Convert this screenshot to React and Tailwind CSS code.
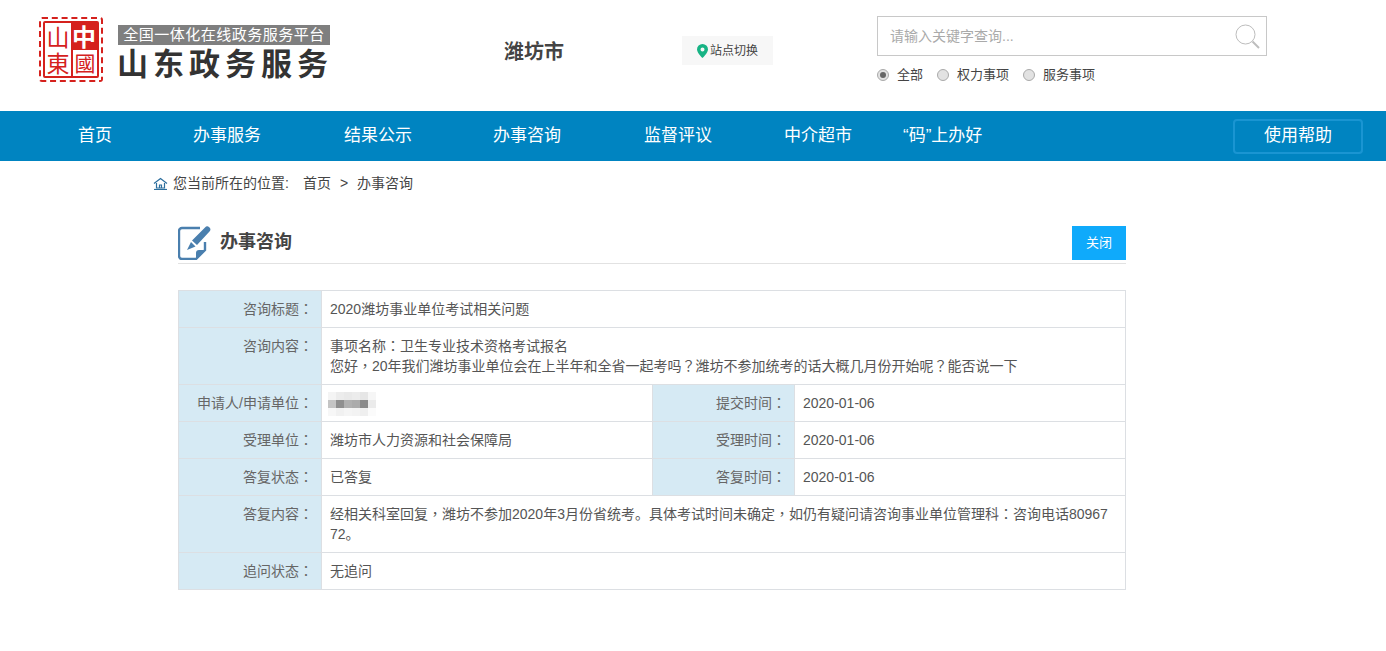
import React from "react";

const navItems = [
  { text: "首页", cls: "ml-[78px]" },
  { text: "办事服务", cls: "ml-[81px]" },
  { text: "结果公示", cls: "ml-[83px]" },
  { text: "办事咨询", cls: "ml-[81px]" },
  { text: "监督评议", cls: "ml-[83px]" },
  { text: "中介超市", cls: "ml-[72px]" },
  { text: "“码”上办好", cls: "ml-[51px]" },
];

const blurCells = [
  "bg-[#f4f4f4]", "bg-[#ececec]", "bg-[#e9e9e9]", "bg-[#ececec]", "bg-[#e6e6e6]", "bg-[#f6f6f6]",
  "bg-[#c4c4c4]", "bg-[#8f8f8f]", "bg-[#b0b0b0]", "bg-[#ababab]", "bg-[#8a8a8a]", "bg-[#ebebeb]",
  "bg-[#f7f7f7]", "bg-[#f1f1f1]", "bg-[#f5f5f5]", "bg-[#f3f3f3]", "bg-[#efefef]", "bg-[#fbfbfb]",
];

// full-width punctuation sits centred in the reference, the TC font draws it that way
function Punct({ text }) {
  return text.split(/([，：？])/).map((part, i) =>
    i % 2 ? (
      <span key={i} className="font-['Noto_Sans_CJK_TC',sans-serif] leading-none">{part}</span>
    ) : (
      part
    )
  );
}

function Seal() {
  return (
    <div className="w-[64px] h-[65px] border-2 border-dashed border-[#d5211d] rounded-[3px] p-[2px] font-['Noto_Sans_CJK_TC',serif] leading-none">
      <div className="h-full border-2 border-[#d5211d] rounded-[2px] flex">
        <div className="w-[26px] text-[#d5211d] flex flex-col items-center justify-around text-[23px]">
          <span>山</span>
          <span>東</span>
        </div>
        <div className="flex-1 flex flex-col">
          <div className="flex-1 bg-[#d5211d] text-white flex items-center justify-center text-[24px] font-bold">中</div>
          <div className="flex-1 text-[#d5211d] border-l-2 border-[#d5211d] flex items-center justify-center text-[21px]">國</div>
        </div>
      </div>
    </div>
  );
}

function Radio({ checked, label, cls }) {
  return (
    <label className={`flex items-center ${cls}`}>
      <span className="w-[12px] h-[12px] rounded-full border border-[#aaa] bg-[#e2e2e2] flex items-center justify-center">
        {checked && <span className="w-[6px] h-[6px] rounded-full bg-[#666]"></span>}
      </span>
      <span className="ml-[8px] text-[13px] text-[#444]">{label}</span>
    </label>
  );
}

function Label({ children }) {
  return (
    <td className="border border-[#dcdfe3] bg-[#d6eaf4] text-right align-top pt-[8px] pr-[8px] text-[#666]">
      <Punct text={children} />
    </td>
  );
}

function Value({ children, span }) {
  return (
    <td colSpan={span} className="border border-[#dcdfe3] align-top pt-[8px] pl-[8px] pr-[10px] text-[#555] break-all">
      {children}
    </td>
  );
}

export default function App() {
  return (
    <div className="bg-white min-h-[651px] font-['Liberation_Sans','Noto_Sans_CJK_SC',sans-serif] text-[14px] leading-[20px]">
      {/* header */}
      <div className="h-[111px] flex">
        <div className="ml-[39px] mt-[17px]">
          <Seal />
        </div>
        <div className="ml-[15px] mt-[25px] w-[212px]">
          <div className="h-[20px] bg-[#7f7f7f] text-white text-[15px] leading-[20px] tracking-[0.5px] text-center whitespace-nowrap">
            全国一体化在线政务服务平台
          </div>
          <div className="mt-[1px] -ml-[1px] text-[31px] leading-[38px] font-bold text-[#333] tracking-[5px] whitespace-nowrap">
            山东政务服务
          </div>
        </div>
        <div className="ml-[174px] mt-[38px] w-[60px] text-[20px] leading-[28px] font-bold text-[#444] whitespace-nowrap">
          潍坊市
        </div>
        <div className="ml-[118px] mt-[36px] w-[91px] h-[29px] bg-[#f7f7f7] flex items-center justify-center text-[12px] text-[#444]">
          <svg width="11" height="14" viewBox="0 0 11 14" className="mr-[2px]">
            <path fillRule="evenodd" d="M5.500 0a5.500 5.500 0 0 1 5.500 5.500c0 3.500-5.500 8.500-5.500 8.500S0 9 0 5.500A5.500 5.500 0 0 1 5.500 0zm0 3.500a2 2 0 1 0 0 4 2 2 0 0 0 0-4z" fill="#17b384" />
          </svg>
          站点切换
        </div>
        <div className="ml-[104px] mt-[16px] w-[390px]">
          <div className="h-[40px] border border-[#c8c8c8] flex items-center justify-between pl-[12px] pr-[6px]">
            <span className="text-[14px] text-[#aaa]">请输入关键字查询...</span>
            <svg width="25" height="25" viewBox="0 0 25 25" fill="none" stroke="#bdbdbd">
              <circle cx="10.500" cy="10.500" r="9.500" strokeWidth="1" />
              <path d="M17.500 17.500 24 24" strokeWidth="2" />
            </svg>
          </div>
          <div className="flex mt-[9px]">
            <Radio checked label="全部" />
            <Radio label="权力事项" cls="ml-[14px]" />
            <Radio label="服务事项" cls="ml-[14px]" />
          </div>
        </div>
      </div>

      {/* nav */}
      <div className="h-[50px] bg-[#0084c1] flex items-center text-white text-[17px]">
        {navItems.map((item) => (
          <a key={item.text} className={`${item.cls} whitespace-nowrap`}>
            {item.text}
          </a>
        ))}
        <button className="ml-auto mr-[23px] w-[130px] h-[35px] border-2 border-[#1a95d2] rounded-[4px] text-[17px] text-white">
          使用帮助
        </button>
      </div>

      {/* breadcrumb */}
      <div className="ml-[153px] mt-[11px] h-[21px] flex items-center text-[14px] text-[#444]">
        <svg width="15" height="13" viewBox="0 0 15 13" fill="none" stroke="#2d6f9e" strokeWidth="1.2" className="mr-[5px] mt-[2px]">
          <path d="M1 6.500 7.500 1.500 14 6.500" />
          <path d="M3.500 6v5h8V6" />
          <path d="M6.500 11V8h2v3" />
          <path d="M1 12.500h13" />
        </svg>
        <span>您当前所在的位置:</span>
        <span className="ml-[14px]">首页</span>
        <span className="ml-[9px]">&gt;</span>
        <span className="ml-[9px]">办事咨询</span>
      </div>

      <div className="ml-[178px] w-[948px]">
        {/* title */}
        <div className="mt-[33px] h-[38px] border-b border-[#e2e2e2] flex items-start">
          <svg width="33" height="34" viewBox="0 0 33 34" className="shrink-0">
            <path d="M22 2H4a3 3 0 0 0-3 3v25a3 3 0 0 0 3 3h14l9-9v-8" fill="none" stroke="#4a7fae" strokeWidth="2.400" />
            <path d="M18 33v-6a3 3 0 0 1 3-3h6z" fill="#4a7fae" />
            <path d="M27 1.500a3 3 0 0 1 4.500 4L19 19l-5-4.500z" fill="#4a7fae" />
            <path d="M13 16l4.500 4.500L9 24z" fill="#4a7fae" />
          </svg>
          <h1 className="ml-[9px] mt-[3px] text-[18px] leading-[26px] font-bold text-[#444]">办事咨询</h1>
          <button className="ml-auto w-[54px] h-[34px] bg-[#0faafb] text-white text-[13px]">关闭</button>
        </div>

        {/* detail table */}
        <table className="mt-[26px] w-[948px] table-fixed border-collapse">
          <colgroup>
            <col className="w-[143px]" />
            <col className="w-[331px]" />
            <col className="w-[142px]" />
            <col />
          </colgroup>
          <tbody>
            <tr className="h-[37px]">
              <Label>咨询标题：</Label>
              <Value span={3}>2020潍坊事业单位考试相关问题</Value>
            </tr>
            <tr className="h-[57px]">
              <Label>咨询内容：</Label>
              <Value span={3}>
                <Punct text="事项名称：卫生专业技术资格考试报名" />
                <br />
                <Punct text="您好，20年我们潍坊事业单位会在上半年和全省一起考吗？潍坊不参加统考的话大概几月份开始呢？能否说一下" />
              </Value>
            </tr>
            <tr className="h-[37px]">
              <Label>申请人/申请单位：</Label>
              <Value>
                <div className="grid grid-cols-6 grid-rows-3 w-[48px] h-[24px] -ml-[2px] -mt-[1px] blur-[0.5px]">
                  {blurCells.map((c, i) => (
                    <span key={i} className={c}></span>
                  ))}
                </div>
              </Value>
              <Label>提交时间：</Label>
              <Value>2020-01-06</Value>
            </tr>
            <tr className="h-[37px]">
              <Label>受理单位：</Label>
              <Value>潍坊市人力资源和社会保障局</Value>
              <Label>受理时间：</Label>
              <Value>2020-01-06</Value>
            </tr>
            <tr className="h-[37px]">
              <Label>答复状态：</Label>
              <Value>已答复</Value>
              <Label>答复时间：</Label>
              <Value>2020-01-06</Value>
            </tr>
            <tr className="h-[57px]">
              <Label>答复内容：</Label>
              <Value span={3}>
                <Punct text="经相关科室回复，潍坊不参加2020年3月份省统考。具体考试时间未确定，如仍有疑问请咨询事业单位管理科：咨询电话8096772。" />
              </Value>
            </tr>
            <tr className="h-[37px]">
              <Label>追问状态：</Label>
              <Value span={3}>无追问</Value>
            </tr>
          </tbody>
        </table>
      </div>
    </div>
  );
}
